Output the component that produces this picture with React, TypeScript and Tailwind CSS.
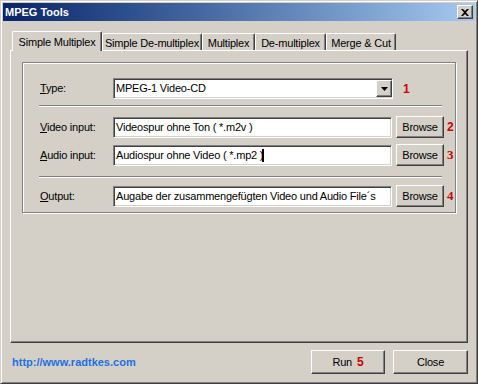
import React from "react";

const tabs = [
  { label: "Simple Multiplex", w: "w-[90px]", active: true },
  { label: "Simple De-multiplex", w: "w-[100px]", active: false },
  { label: "Multiplex", w: "w-[53px]", active: false },
  { label: "De-multiplex", w: "w-[71px]", active: false },
  { label: "Merge & Cut", w: "w-[70px]", active: false },
];

const raised =
  "border border-t-white border-l-white border-r-[#404040] border-b-[#404040] shadow-[inset_-1px_-1px_0_#808080] bg-[#d4d0c8]";
const sunken =
  "border border-t-[#808080] border-l-[#808080] border-r-white border-b-white shadow-[inset_1px_1px_0_#404040,inset_-1px_-1px_0_#d4d0c8] bg-white";

const Label = ({ k, rest }: { k: string; rest: string }) => (
  <div className="w-[73px] shrink-0 text-black">
    <span className="underline">{k}</span>
    {rest}
  </div>
);

const Num = ({ n, serif, gap }: { n: string; serif?: boolean; gap?: string }) => (
  <span
    className={
      serif
        ? `${gap ?? "ml-[3px]"} font-['Liberation_Serif',serif] text-[13px] font-bold text-[#cc0000] tracking-normal`
        : `${gap ?? "ml-[3px]"} text-[12px] font-bold text-[#cc0000] tracking-normal`
    }
  >
    {n}
  </span>
);

const Separator = () => (
  <div className="ml-[16px] w-[403px] h-[2px] border-t border-t-[#808080] border-b border-b-white" />
);

const FileRow = ({
  k,
  rest,
  value,
  n,
  serif,
  caret,
}: {
  k: string;
  rest: string;
  value: string;
  n: string;
  serif?: boolean;
  caret?: boolean;
}) => (
  <div className="flex items-center pl-[17px]">
    <Label k={k} rest={rest} />
    <div className={`${sunken} w-[279px] h-[21px] flex items-center pl-[2px] whitespace-nowrap overflow-hidden`}>
      {value}
      {caret && <span className="-ml-[1px] w-[2px] h-[13px] bg-black" />}
    </div>
    <button className={`${raised} ml-[4px] w-[48px] h-[22px] text-[11px] text-black`}>Browse</button>
    <Num n={n} serif={serif} />
  </div>
);

export default function App() {
  return (
    <div className="w-[478px] h-[384px] bg-[#d4d0c8] border border-t-[#d4d0c8] border-l-[#d4d0c8] border-r-[#404040] border-b-[#404040] shadow-[inset_1px_1px_0_#fff,inset_-1px_-1px_0_#808080] p-[2px] flex flex-col font-['Liberation_Sans',Arial,sans-serif] text-[11px] tracking-[-0.2px] text-black">
      {/* title bar */}
      <div className="h-[18px] bg-linear-to-r from-[#0a246a] to-[#a6caf0] flex items-center pl-[2px] pr-[2px]">
        <span className="text-white font-bold text-[11px] tracking-normal">MPEG Tools</span>
        <button className={`${raised} ml-auto w-[16px] h-[14px] flex items-center justify-center`}>
          <svg width="8" height="7" viewBox="0 0 8 7">
            <path d="M0 0h2l2 2 2-2h2L5 3.5 8 7H6L4 5 2 7H0l3-3.5z" fill="#000" />
          </svg>
        </button>
      </div>

      <div className="flex flex-col px-[7px] pt-[10px]">
        {/* tabs */}
        <div className="flex items-end h-[19px] pl-[2px]">
          {tabs.map((t) => (
            <div
              key={t.label}
              className={
                t.active
                  ? `${t.w} h-[20px] -mb-px relative z-10 bg-[#d4d0c8] border-l border-t border-r border-l-white border-t-white border-r-[#404040] shadow-[inset_-1px_0_0_#808080] rounded-t-[2px] flex items-start justify-center pt-[2px] whitespace-nowrap`
                  : `${t.w} h-[17px] bg-[#d4d0c8] border-l border-t border-r border-l-white border-t-white border-r-[#404040] shadow-[inset_-1px_0_0_#808080] rounded-t-[2px] flex items-start justify-center pt-[1px] whitespace-nowrap`
              }
            >
              {t.label}
            </div>
          ))}
        </div>

        {/* panel */}
        <div className="h-[293px] border border-t-white border-l-white border-r-[#404040] border-b-[#404040] shadow-[inset_-1px_-1px_0_#808080] pl-[11px] pt-[11px]">
          <div className="w-[434px] h-[151px] border border-[#808080] shadow-[inset_1px_1px_0_#fff,1px_1px_0_#fff] flex flex-col">
            {/* type row */}
            <div className="flex items-center pl-[17px] mt-[15px]">
              <Label k="T" rest="ype:" />
              <div className={`${sunken} w-[280px] h-[21px] flex items-center pl-[2px]`}>
                <span className="flex-1">MPEG-1 Video-CD</span>
                <div className={`${raised} w-[16px] h-[17px] flex items-center justify-center`}>
                  <svg width="7" height="4" viewBox="0 0 7 4">
                    <path d="M0 0h7L3.5 4z" fill="#000" />
                  </svg>
                </div>
              </div>
              <Num n="1" gap="ml-[10px]" />
            </div>

            <div className="mt-[6px]">
              <Separator />
            </div>

            <div className="mt-[9px]">
              <FileRow k="V" rest="ideo input:" value="Videospur ohne Ton ( *.m2v )" n="2" />
            </div>
            <div className="mt-[6px]">
              <FileRow k="A" rest="udio input:" value="Audiospur ohne Video ( *.mp2 )" n="3" serif caret />
            </div>

            <div className="mt-[10px]">
              <Separator />
            </div>

            <div className="mt-[7px]">
              <FileRow
                k="O"
                rest="utput:"
                value="Augabe der zusammengefügten Video und Audio File´s"
                n="4"
                serif
              />
            </div>
          </div>
        </div>

        {/* bottom row */}
        <div className="mt-[7px] h-[24px] flex items-center">
          <a className="ml-[2px] font-bold text-[11px] tracking-normal text-[#1a72e0]">http://www.radtkes.com</a>
          <button className={`${raised} ml-auto w-[74px] h-[24px] flex items-center justify-center gap-[5px] text-[11px]`}>
            Run
            <span className="text-[12px] font-bold text-[#cc0000]">5</span>
          </button>
          <button className={`${raised} ml-[8px] w-[75px] h-[24px] text-[11px]`}>Close</button>
        </div>
      </div>
    </div>
  );
}
